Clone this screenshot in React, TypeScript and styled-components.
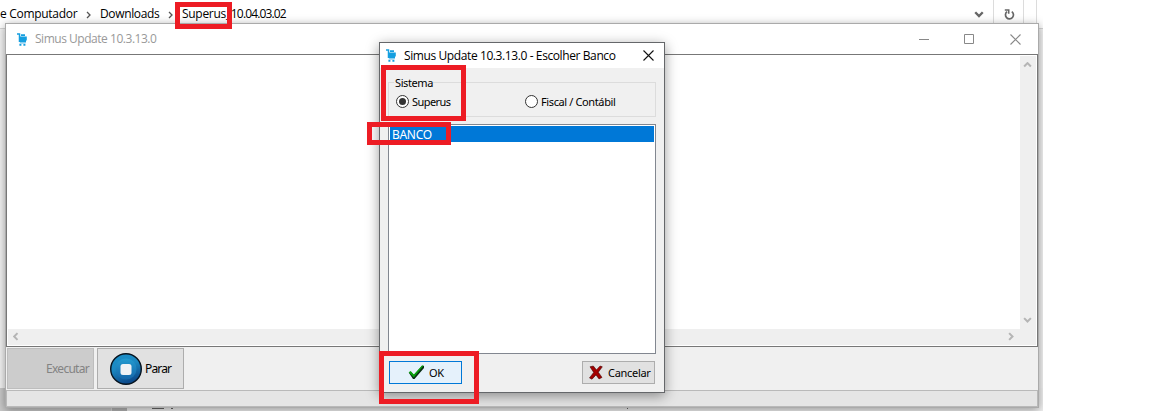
import React from "react";
import styled, { createGlobalStyle } from "styled-components";

const Global = createGlobalStyle`
  * { box-sizing: border-box; }
  html, body { margin: 0; padding: 0; background: #fff; overflow: hidden; }
  svg { display: block; flex: none; }
`;

const Desktop = styled.main`
  position: relative;
  width: 1150px;
  height: 414px;
  overflow: hidden;
  background: #fff;
  color: #000;
  font: 12px/16px "Open Sans", sans-serif;
  white-space: nowrap;
`;

const Explorer = styled.section`
  width: 1043px;
  height: 411px;
  display: flex;
  flex-direction: column;
  overflow: hidden;
  background: #f3f3f3;
`;

const AddressBar = styled.header`
  height: 29px;
  flex: none;
  display: flex;
  justify-content: space-between;
  background: #fff;
  border-bottom: 1px solid #d5d5d5;
`;

const Breadcrumb = styled.nav`
  display: flex;
  align-items: center;
  height: 28px;
  svg { margin: 1px 0 0; }
`;

const Label = styled.span<{ $ls?: number; $size?: number; $color?: string }>`
  display: block;
  letter-spacing: ${(p) => p.$ls ?? 0}px;
  font-size: ${(p) => p.$size ?? 12}px;
  color: ${(p) => p.$color ?? "inherit"};
`;

const Crumb = styled(Label)<{ $w?: number; $indent?: number }>`
  width: ${(p) => (p.$w ? `${p.$w}px` : "auto")};
  padding-left: ${(p) => p.$indent ?? 0}px;
`;

const Version = styled.span`
  letter-spacing: -0.85px;
`;

const AddressTools = styled.div`
  display: grid;
  grid-template-columns: 28px 30px 13px 6px;
  height: 23px;
`;

const ToolCell = styled.div<{ $pad?: number }>`
  display: flex;
  align-items: center;
  padding: 6px 0 0 ${(p) => p.$pad ?? 0}px;
  border-right: 1px solid #dcdcdc;
  &:last-child { border: 0; }
`;

const FileArea = styled.div`
  flex: 1;
  display: flex;
  flex-direction: column;
  justify-content: flex-end;
`;

const FileFooter = styled.div`
  height: 23px;
  display: flex;
  align-items: flex-end;
  background: linear-gradient(90deg, #c9c9c9 0 111px, #d9d9d9 111px 112px, #b5b5b5 112px 127px, #f1f1f1 127px);
`;

const FooterMark = styled.i<{ $left: number; $w: number; $h: number }>`
  display: block;
  width: ${(p) => p.$w}px;
  height: ${(p) => p.$h}px;
  margin-left: ${(p) => p.$left}px;
  margin-bottom: 2px;
  background: #666;
`;

const MainWindow = styled.section`
  position: absolute;
  left: 5px;
  top: 23px;
  width: 1034px;
  height: 385px;
  display: flex;
  flex-direction: column;
  border: 1px solid #aaa;
  background: #f0f0f0;
  box-shadow: 0 2px 9px rgba(0, 0, 0, 0.38);
  clip-path: inset(-13px -4px -3px -6px);
`;

const TitleBar = styled.header<{ $h: number; $pad: number; $gap: number }>`
  height: ${(p) => p.$h}px;
  flex: none;
  display: flex;
  align-items: center;
  padding-left: ${(p) => p.$pad}px;
  gap: ${(p) => p.$gap}px;
  background: #fff;
`;

const WindowControls = styled.div<{ $right: number }>`
  display: flex;
  gap: 35px;
  margin-left: auto;
  padding-right: ${(p) => p.$right}px;
`;

const Memo = styled.div`
  height: 293px;
  flex: none;
  display: grid;
  grid-template: 1fr 16px / 1fr 16px;
  border: 1px solid #777;
  padding: 1px;
  background: #fff;
`;

const ScrollBar = styled.div<{ $vertical?: boolean }>`
  display: flex;
  flex-direction: ${(p) => (p.$vertical ? "column" : "row")};
  justify-content: space-between;
  align-items: center;
  padding: ${(p) => (p.$vertical ? "6px 2px 6px 0" : "0 6px 2px 5px")};
  background: #efefef;
`;

const ScrollCorner = styled.div`
  background: #efefef;
`;

const Toolbar = styled.div`
  height: 43px;
  flex: none;
  display: flex;
  gap: 3px;
  padding: 1px 1px;
`;

const ToolButton = styled.button<{ $disabled?: boolean }>`
  width: 87px;
  height: 41px;
  display: flex;
  align-items: center;
  gap: 3px;
  padding: 0 4px 0 12px;
  justify-content: ${(p) => (p.$disabled ? "flex-end" : "flex-start")};
  border: 1px solid ${(p) => (p.$disabled ? "#bdbdbd" : "#adadad")};
  background: ${(p) => (p.$disabled ? "#ccc" : "#e1e1e1")};
  color: ${(p) => (p.$disabled ? "#838383" : "#000")};
  font: 12px/16px "Noto Sans", sans-serif;
`;

const StatusBar = styled.footer`
  flex: 1;
  border: 1px solid #b9b9b9;
  background: #e5e5e5;
`;

const Dialog = styled.section`
  position: absolute;
  left: 379px;
  top: 42px;
  width: 286px;
  height: 351px;
  display: flex;
  flex-direction: column;
  border: 1px solid #65676a;
  background: #f0f0f0;
  box-shadow: 0 3px 12px rgba(0, 0, 0, 0.4);
`;

const DialogBody = styled.div`
  flex: 1;
  display: flex;
  flex-direction: column;
  padding: 8px 8px 7px;
  font: 11px/14px "Noto Sans", sans-serif;
`;

const Group = styled.fieldset`
  height: 41px;
  flex: none;
  margin: 0;
  padding: 0 7px;
  min-width: 0;
  border: 1px solid #dcdcdc;
`;

const Legend = styled.legend`
  width: 39px;
  margin-left: -2px;
  padding: 0 0 0 1px;
  height: 12px;
`;

const RadioRow = styled.div`
  display: grid;
  grid-template-columns: 129px 1fr;
  padding-top: 7px;
`;

const RadioLabel = styled.label`
  display: flex;
  align-items: center;
  gap: 3px;
  height: 13px;
  line-height: 15px;
`;

const ListBox = styled.div`
  height: 230px;
  flex: none;
  margin-top: 7px;
  padding: 1px;
  border: 1px solid #828790;
  background: #fff;
`;

const SelectedRow = styled.div`
  height: 16px;
  padding-left: 2px;
  background: #0078d7;
  color: #fff;
  font: 12px/17px "Noto Sans", sans-serif;
`;

const Actions = styled.div`
  display: flex;
  justify-content: space-between;
  padding: 7px 1px 0;
`;

const ActionButton = styled.button<{ $primary?: boolean }>`
  width: 73px;
  height: 23px;
  display: flex;
  align-items: center;
  gap: ${(p) => (p.$primary ? 4 : 5)}px;
  padding: 0 0 0 ${(p) => (p.$primary ? 18 : 6)}px;
  border: 1px solid ${(p) => (p.$primary ? "#0078d7" : "#adadad")};
  background: ${(p) => (p.$primary ? "#e5f1fb" : "#e1e1e1")};
  color: #000;
  font: 11px/14px "Noto Sans", sans-serif;
`;

const Highlight = styled.div<{ $x: number; $y: number; $w: number; $h: number; $t?: number }>`
  position: absolute;
  left: ${(p) => p.$x}px;
  top: ${(p) => p.$y}px;
  width: ${(p) => p.$w}px;
  height: ${(p) => p.$h}px;
  border: ${(p) => p.$t ?? 5}px solid #ed1c24;
`;

const arrows = {
  right: "M1 1l3 3-3 3",
  left: "M4 1L1 4l3 3",
  up: "M1 4l3-3 3 3",
  down: "M1 1l3 3 3-3",
};

function Chevron({ dir, size = 9, color = "#b5b5b5", weight = 1.8 }: { dir: keyof typeof arrows; size?: number; color?: string; weight?: number }) {
  const flat = dir === "up" || dir === "down";
  return (
    <svg width={flat ? size : size * 0.625} height={flat ? size * 0.625 : size} viewBox={flat ? "0 0 8 5" : "0 0 5 8"} fill="none" stroke={color} strokeWidth={weight}>
      <path d={arrows[dir]} />
    </svg>
  );
}

function CartIcon() {
  return (
    <svg width="10" height="13" viewBox="0 0 10 13" fill="none" stroke="#159fe0">
      <path d="M0 1h2.5v8" strokeWidth="1.5" />
      <path d="M4 2.2h4M3 4.5h6.8M3 6.5h6.8M3 8.5h6" strokeWidth="1.8" />
      <path d="M2.5 10.2h6" stroke="#8acbed" strokeWidth="1" />
      <path d="M2.4 11.9h2M6.4 11.9h2" strokeWidth="1.8" />
    </svg>
  );
}

function RefreshIcon() {
  return (
    <svg width="11" height="12" viewBox="0 0 11 12" fill="none" stroke="#666" strokeWidth="1.7">
      <path d="M7.8 2.6A4 4 0 1 1 3 2.7" />
      <path d="M.8 1h3.9v3.7" strokeWidth="1.6" />
    </svg>
  );
}

function StopIcon() {
  return (
    <svg width="32" height="32" viewBox="0 0 32 32">
      <defs>
        <linearGradient id="stopFace" x1="0" y1="0" x2=".35" y2="1">
          <stop stopColor="#1b8fc8" />
          <stop offset=".5" stopColor="#1b88c1" />
          <stop offset="1" stopColor="#0c4b8c" />
        </linearGradient>
        <linearGradient id="stopCore" x1="0" y1="0" x2="0" y2="1">
          <stop stopColor="#239bd0" />
          <stop offset="1" stopColor="#1566a9" />
        </linearGradient>
      </defs>
      <circle cx="16" cy="16" r="15.3" fill="url(#stopFace)" stroke="#07131e" strokeWidth="1.4" />
      <circle cx="16" cy="16" r="10.5" fill="url(#stopCore)" />
      <rect x="10.5" y="11" width="11" height="11" rx="2.5" fill="#f0f2f5" />
    </svg>
  );
}

function CheckIcon() {
  return (
    <svg width="17" height="15" viewBox="0 0 17 15">
      <path d="M1 8l2-1 3 3L14 .8l2 .2v2L6.5 14H5z" fill="#092d14" />
      <path d="M.6 7.2L2.7 6l3.1 3.4L14 .5h1.7L5.8 12.5z" fill="#08a00b" />
    </svg>
  );
}

function CrossIcon() {
  return (
    <svg width="14" height="15" viewBox="0 0 14 15">
      <path d="M1 1.8L4.3 1l3.2 3.9L11.2 1l2.1.8-4 5.4 3.7 5.2-3 1.5L7 9.9 3 14.2l-2.5-1.3L4.7 7.4z" fill="#990000" stroke="#4a0505" strokeWidth=".6" />
      <path d="M2.4 2.3l8.8 10.2M11 2L2.3 12.7" stroke="#a90000" strokeWidth="1.2" />
    </svg>
  );
}

function Radio({ checked = false }: { checked?: boolean }) {
  return (
    <svg width="13" height="13" viewBox="0 0 13 13">
      <circle cx="6.5" cy="6.5" r="6" fill="#fff" stroke="#333" />
      {checked && <circle cx="6.5" cy="6.5" r="3.5" fill="#333" />}
    </svg>
  );
}

function CloseIcon({ color }: { color: string }) {
  return (
    <svg width="11" height="11" viewBox="0 0 11 11" fill="none" stroke={color} strokeWidth="1.1">
      <path d="M.5.5l10 10m0-10l-10 10" />
    </svg>
  );
}

export default function App() {
  return (
    <Desktop>
      <Global />
      <Explorer>
        <AddressBar>
          <Breadcrumb>
            <Crumb $w={86} $ls={-0.3}>e Computador</Crumb>
            <Chevron dir="right" size={8} color="#555" weight={1.3} />
            <Crumb $w={77} $indent={9} $ls={-0.35}>Downloads</Crumb>
            <Chevron dir="right" size={8} color="#555" weight={1.3} />
            <Crumb $indent={9} $ls={-0.3}>Superus_<Version>10.04.03.02</Version></Crumb>
          </Breadcrumb>
          <AddressTools>
            <ToolCell $pad={8}><Chevron dir="down" size={10} color="#666" weight={1.9} /></ToolCell>
            <ToolCell $pad={10}><RefreshIcon /></ToolCell>
            <ToolCell />
            <ToolCell />
          </AddressTools>
        </AddressBar>
        <FileArea>
          <FileFooter>
            <FooterMark $left={152} $w={12} $h={2} />
            <FooterMark $left={7} $w={2} $h={4} />
            <FooterMark $left={454} $w={1} $h={2} />
          </FileFooter>
        </FileArea>
      </Explorer>

      <MainWindow>
        <TitleBar $h={30} $pad={11} $gap={8}>
          <CartIcon />
          <Label $ls={-0.47} $color="#999">Simus Update 10.3.13.0</Label>
          <WindowControls $right={17}>
            <svg width="11" height="11" stroke="#888"><path d="M1 5.5h10" /></svg>
            <svg width="11" height="11" fill="none" stroke="#888"><path d="M.5.5h9v9h-9z" /></svg>
            <CloseIcon color="#888" />
          </WindowControls>
        </TitleBar>
        <Memo>
          <div />
          <ScrollBar $vertical><Chevron dir="up" /><Chevron dir="down" /></ScrollBar>
          <ScrollBar><Chevron dir="left" /><Chevron dir="right" /></ScrollBar>
          <ScrollCorner />
        </Memo>
        <Toolbar>
          <ToolButton $disabled><Label $ls={-0.72}>Executar</Label></ToolButton>
          <ToolButton><StopIcon /><Label $ls={-0.85}>Parar</Label></ToolButton>
        </Toolbar>
        <StatusBar />
      </MainWindow>

      <Dialog>
        <TitleBar $h={25} $pad={6} $gap={8}>
          <CartIcon />
          <Label $ls={-0.4}>Simus Update 10.3.13.0 - Escolher Banco</Label>
          <WindowControls $right={10}><CloseIcon color="#111" /></WindowControls>
        </TitleBar>
        <DialogBody>
          <Group>
            <Legend><Label $size={11} $ls={-0.4}>Sistema</Label></Legend>
            <RadioRow>
              <RadioLabel><Radio checked /><Label $size={11} $ls={-0.55}>Superus</Label></RadioLabel>
              <RadioLabel><Radio /><Label $size={11} $ls={-0.38}>Fiscal / Contábil</Label></RadioLabel>
            </RadioRow>
          </Group>
          <ListBox><SelectedRow><Label $ls={-0.3}>BANCO</Label></SelectedRow></ListBox>
          <Actions>
            <ActionButton $primary><CheckIcon /><Label $size={11} $ls={-0.3}>OK</Label></ActionButton>
            <ActionButton><CrossIcon /><Label $size={11} $ls={-0.3}>Cancelar</Label></ActionButton>
          </Actions>
        </DialogBody>
      </Dialog>

      <Highlight $x={175} $y={2} $w={57} $h={27} />
      <Highlight $x={381} $y={65} $w={85} $h={56} />
      <Highlight $x={367} $y={122} $w={84} $h={23} />
      <Highlight $x={379} $y={351} $w={100} $h={53} />
    </Desktop>
  );
}
